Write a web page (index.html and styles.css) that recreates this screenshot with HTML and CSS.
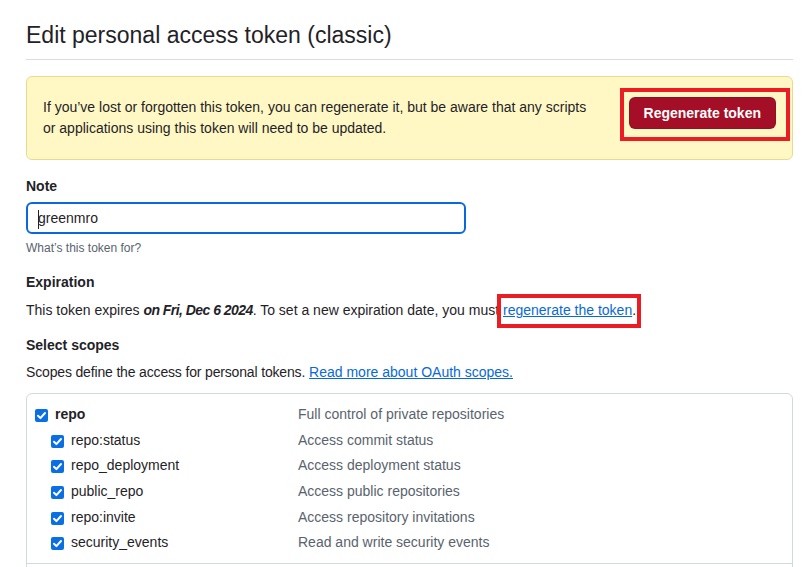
FILE: index.html
```html
<!DOCTYPE html>
<html lang="en">
<head>
<meta charset="utf-8">
<title>Edit personal access token (classic)</title>
<link rel="stylesheet" href="styles.css">
</head>
<body>
<div class="page">
  <div class="subhead">
    <h1 class="subhead-heading">Edit personal access token (classic)</h1>
  </div>

  <div class="flash">
    <p class="flash-text">If you’ve lost or forgotten this token, you can regenerate it, but be aware that any scripts or applications using this token will need to be updated.</p>
    <span class="annot-wrap">
      <button class="btn-danger" type="button">Regenerate token</button>
      <span class="annot annot-btn"></span>
    </span>
  </div>

  <div class="form-group first">
    <div class="label">Note</div>
    <div class="input"><span class="caret"></span>greenmro</div>
    <p class="hint">What’s this token for?</p>
  </div>

  <div class="form-group expiration">
    <div class="label">Expiration</div>
    <p class="text">This token expires <strong class="date"><em>on Fri, Dec 6 2024</em></strong>. To set a new expiration date, you must <span class="annot-inline"><a href="#" class="link">regenerate the token</a>.<span class="annot annot-link"></span></span></p>
  </div>

  <div class="form-group scopes-group">
    <div class="label">Select scopes</div>
    <p class="text"><span class="tight">Scopes define the access for personal tokens.</span> <a href="#" class="link">Read more about OAuth scopes.</a></p>
  </div>

  <div class="scopes">
    <ul class="scope-group">
      <li class="scope-row">
        <span class="scope-name"><span class="cb"><svg viewBox="0 0 13 13" width="13" height="13"><path d="M3 6.8 L5.4 9.1 L10 4" fill="none" stroke="#fff" stroke-width="2" stroke-linecap="round" stroke-linejoin="round"/></svg></span><strong>repo</strong></span>
        <span class="scope-desc">Full control of private repositories</span>
      </li>
      <li class="scope-row child">
        <span class="scope-name"><span class="cb"><svg viewBox="0 0 13 13" width="13" height="13"><path d="M3 6.8 L5.4 9.1 L10 4" fill="none" stroke="#fff" stroke-width="2" stroke-linecap="round" stroke-linejoin="round"/></svg></span>repo:status</span>
        <span class="scope-desc">Access commit status</span>
      </li>
      <li class="scope-row child">
        <span class="scope-name"><span class="cb"><svg viewBox="0 0 13 13" width="13" height="13"><path d="M3 6.8 L5.4 9.1 L10 4" fill="none" stroke="#fff" stroke-width="2" stroke-linecap="round" stroke-linejoin="round"/></svg></span>repo_deployment</span>
        <span class="scope-desc">Access deployment status</span>
      </li>
      <li class="scope-row child">
        <span class="scope-name"><span class="cb"><svg viewBox="0 0 13 13" width="13" height="13"><path d="M3 6.8 L5.4 9.1 L10 4" fill="none" stroke="#fff" stroke-width="2" stroke-linecap="round" stroke-linejoin="round"/></svg></span>public_repo</span>
        <span class="scope-desc">Access public repositories</span>
      </li>
      <li class="scope-row child">
        <span class="scope-name"><span class="cb"><svg viewBox="0 0 13 13" width="13" height="13"><path d="M3 6.8 L5.4 9.1 L10 4" fill="none" stroke="#fff" stroke-width="2" stroke-linecap="round" stroke-linejoin="round"/></svg></span>repo:invite</span>
        <span class="scope-desc">Access repository invitations</span>
      </li>
      <li class="scope-row child">
        <span class="scope-name"><span class="cb"><svg viewBox="0 0 13 13" width="13" height="13"><path d="M3 6.8 L5.4 9.1 L10 4" fill="none" stroke="#fff" stroke-width="2" stroke-linecap="round" stroke-linejoin="round"/></svg></span>security_events</span>
        <span class="scope-desc">Read and write security events</span>
      </li>
    </ul>
    <div class="scope-group scope-group-next"></div>
  </div>
</div>
</body>
</html>
```

FILE: styles.css
```css
* { box-sizing: border-box; }

html, body {
  margin: 0;
  background: #ffffff;
}

body {
  font-family: "Liberation Sans", Arial, sans-serif;
  font-size: 14px;
  line-height: 21px;
  color: #1f2328;
  overflow: hidden;
}

.page {
  padding: 17px 10px 0 26px;
}

.subhead {
  border-bottom: 1px solid #d8dee4;
  padding-bottom: 6px;
}

.subhead-heading {
  margin: 0;
  font-size: 23px;
  line-height: 36px;
  font-weight: 400;
  color: #1f2328;
}

.flash {
  margin-top: 16px;
  display: flex;
  align-items: flex-start;
  justify-content: space-between;
  padding: 20px 16px;
  background: #fff8c5;
  border: 1px solid #ecd98f;
  border-radius: 6px;
}

.flash-text {
  margin: 0;
  max-width: 552px;
}

.annot-wrap {
  position: relative;
  display: inline-block;
}

.btn-danger {
  display: block;
  height: 32px;
  padding: 0 14px;
  font-family: inherit;
  font-size: 14px;
  font-weight: 700;
  color: #ffffff;
  background: #a40e26;
  border: 1px solid rgba(31, 35, 40, 0.15);
  border-radius: 6px;
  cursor: pointer;
}

.annot {
  position: absolute;
  border: 4px solid #ea1c24;
  pointer-events: none;
}

.annot-btn {
  left: -9px;
  top: -9px;
  right: -14px;
  bottom: -12px;
}

.annot-inline {
  position: relative;
}

.annot-link {
  left: -6px;
  right: -5px;
  top: -8px;
  bottom: -10px;
}

.form-group {
  margin-top: 16px;
}

.form-group.expiration {
  margin-top: 15px;
}

.form-group.scopes-group {
  margin-top: 14px;
}

.label {
  font-weight: 700;
  margin-bottom: 5px;
}

.input {
  width: 440px;
  height: 32px;
  padding: 0 10px;
  border: 2px solid #0969da;
  border-radius: 6px;
  display: flex;
  align-items: center;
  font-size: 14px;
  color: #1f2328;
}

.caret {
  display: inline-block;
  width: 1px;
  height: 19px;
  background: #1f2328;
  margin-right: -1px;
  margin-top: 2px;
}

.hint {
  margin: 5px 0 0;
  font-size: 12px;
  line-height: 18px;
  color: #59636e;
}

.text {
  margin: 7px 0 0;
}

.scopes-group .text {
  margin-top: 6px;
}

.tight {
  letter-spacing: -0.16px;
}

.date {
  letter-spacing: -0.55px;
}

.link {
  color: #0969da;
  text-decoration: underline;
}

.scopes {
  margin-top: 10px;
  border: 1px solid #d1d9e0;
  border-radius: 6px;
}

.scope-group {
  list-style: none;
  margin: 0;
  padding: 8px 8px 7px;
}

.scope-group + .scope-group {
  border-top: 1px solid #d1d9e0;
}

.scope-group-next {
  height: 30px;
}

.scope-row {
  display: grid;
  grid-template-columns: 263px 1fr;
  align-items: center;
  height: 25.6px;
}

.scope-name {
  display: flex;
  align-items: center;
  gap: 7px;
  color: #1f2328;
}

.scope-row.child .scope-name {
  padding-left: 16px;
}

.scope-desc {
  color: #59636e;
}

.cb {
  display: inline-flex;
  width: 13px;
  height: 13px;
  background: #0b6fe4;
  border-radius: 2px;
  margin-top: 2px;
}
```
